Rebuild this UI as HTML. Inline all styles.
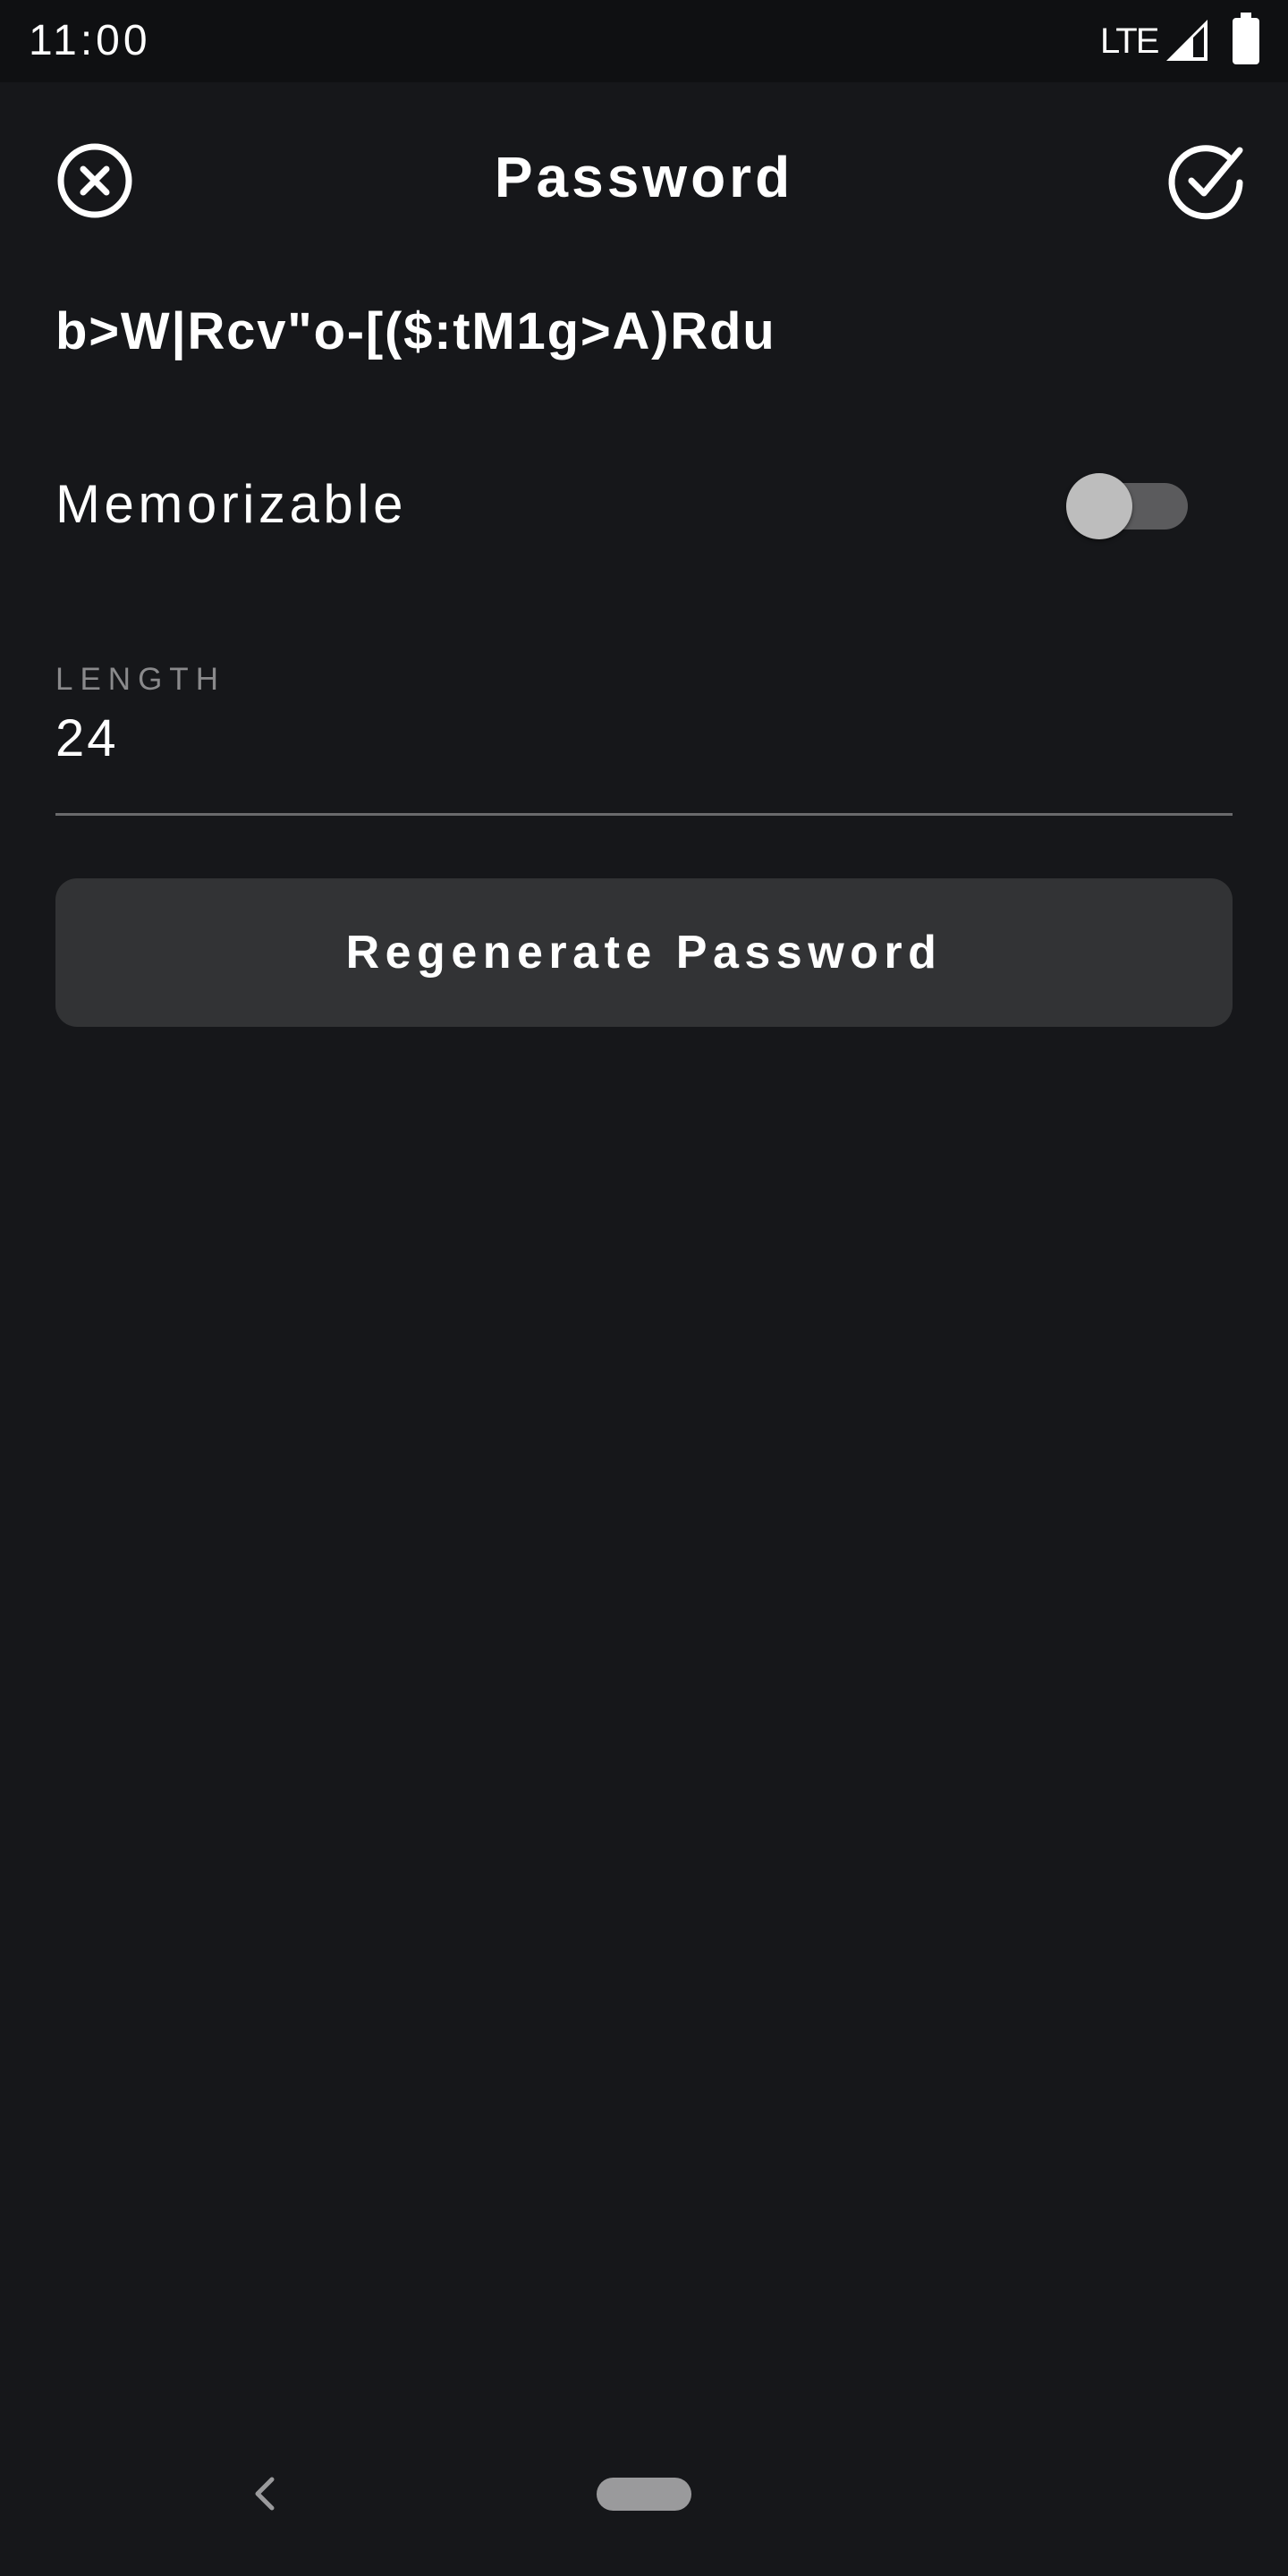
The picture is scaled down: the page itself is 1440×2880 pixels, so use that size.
<!DOCTYPE html>
<html><head><meta charset="utf-8"><style>
*{margin:0;padding:0;box-sizing:border-box}
body{width:1440px;height:2880px;background:#16171a;font-family:"Liberation Sans",sans-serif;color:#fff;position:relative;overflow:hidden}
.a{position:absolute;white-space:nowrap}
</style></head><body>
<div class="a" style="left:0;top:0;width:1440px;height:92px;background:#0f1012"></div>
<div class="a" style="left:32px;top:18px;font-size:48px;line-height:56px;letter-spacing:4px">11:00</div>
<div class="a" style="left:1230px;top:22px;font-size:40px;line-height:48px;letter-spacing:-2px">LTE</div>
<svg class="a" style="left:1300px;top:20px" width="54" height="52" viewBox="0 0 54 52"><polygon points="4,48 50,2 50,48" fill="#fff"/><polygon points="34,22 46,10 46,44 34,44" fill="#0f1012"/></svg>
<div class="a" style="left:1378px;top:20px;width:30px;height:52px;background:#fff;border-radius:4px"></div>
<div class="a" style="left:1387px;top:14px;width:12px;height:8px;background:#fff"></div>

<svg class="a" style="left:62px;top:158px" width="88" height="88" viewBox="0 0 88 88"><circle cx="44" cy="44" r="38" fill="none" stroke="#fff" stroke-width="7"/><path d="M31 31L57 57M57 31L31 57" stroke="#fff" stroke-width="7" stroke-linecap="round"/></svg>
<div class="a" style="left:0;width:1440px;text-align:center;top:160px;font-size:64px;line-height:76px;letter-spacing:4px;font-weight:bold">Password</div>
<svg class="a" style="left:1300px;top:154px" width="100" height="96" viewBox="0 0 100 96"><path d="M74 22A38 38 0 1 0 86 50" fill="none" stroke="#fff" stroke-width="7" stroke-linecap="round"/><path d="M32 48L46 62L86 14" fill="none" stroke="#fff" stroke-width="7" stroke-linecap="round" stroke-linejoin="round"/></svg>

<div class="a" style="left:62px;top:336px;font-size:58px;line-height:70px;font-weight:bold;letter-spacing:1.8px">b&gt;W|Rcv"o-[($:tM1g&gt;A)Rdu</div>

<div class="a" style="left:62px;top:530px;font-size:60px;line-height:68px;letter-spacing:4.5px">Memorizable</div>
<div class="a" style="left:1194px;top:540px;width:134px;height:52px;background:#5b5b5d;border-radius:26px"></div>
<div class="a" style="left:1192px;top:529px;width:74px;height:74px;background:#bdbdbd;border-radius:50%;box-shadow:0 2px 4px rgba(0,0,0,.5)"></div>

<div class="a" style="left:62px;top:740px;font-size:35px;line-height:40px;color:#8a8a8c;letter-spacing:8px">LENGTH</div>
<div class="a" style="left:62px;top:794px;font-size:58px;line-height:64px;letter-spacing:3px">24</div>
<div class="a" style="left:62px;top:909px;width:1316px;height:3px;background:#6a6a6c"></div>

<div class="a" style="left:62px;top:982px;width:1316px;height:166px;background:#323335;border-radius:24px;text-align:center;line-height:166px;font-size:52px;font-weight:bold;letter-spacing:6.5px">Regenerate Password</div>

<svg class="a" style="left:278px;top:2766px" width="36" height="44" viewBox="0 0 36 44"><path d="M26 6L10 22L26 38" fill="none" stroke="#9a9a9c" stroke-width="5" stroke-linecap="round" stroke-linejoin="round"/></svg>
<div class="a" style="left:667px;top:2770px;width:106px;height:37px;background:#9a9a9c;border-radius:19px"></div>
</body></html>
